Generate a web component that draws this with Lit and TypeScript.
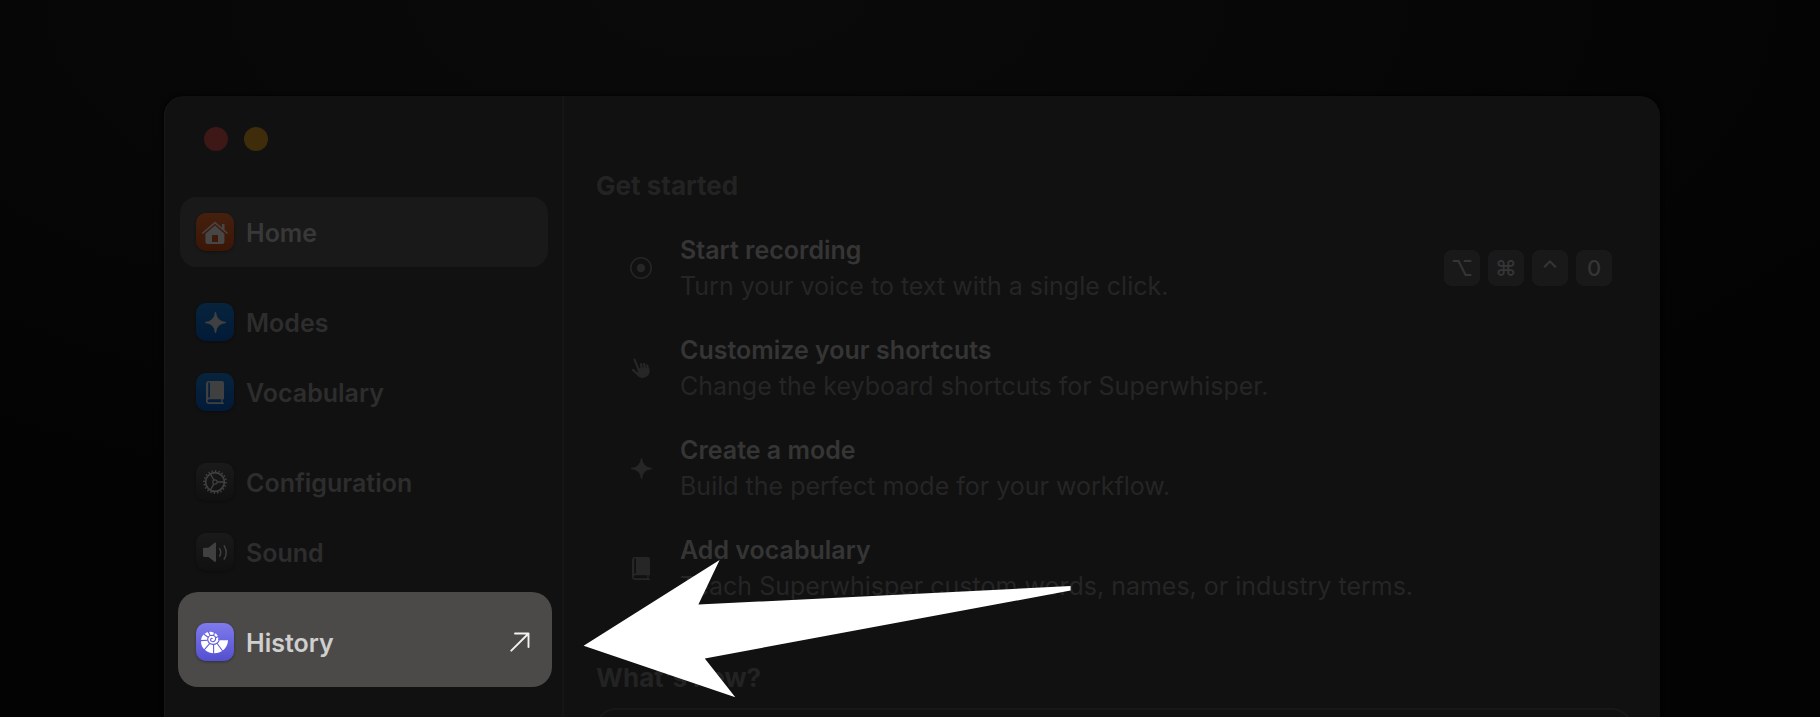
import { LitElement, html, svg, css, nothing } from "lit";
import { customElement, property } from "lit/decorators.js";

const book = svg`
  <path fill-rule="evenodd" d="M13 8H26Q28 8 28 10V25Q28 26.500 26.600 26.700V29.300L28 30V31H13Q10 31 10 28V11Q10 8 13 8ZM12.300 9.500V24.500H14V9.500ZM13 26.300Q11.600 26.300 11.600 27.800T13 29.300H25.300V26.300Z" fill="currentColor"/>`;

const sparkle = svg`
  <path d="M19.500 9Q20.400 18.600 30 19.500Q20.400 20.400 19.500 30Q18.600 20.400 9 19.500Q18.600 18.600 19.500 9Z" fill="currentColor" stroke="currentColor" stroke-width="1" stroke-linejoin="round"/>`;

const glyphs: Record<string, unknown> = {
  home: svg`
    <path d="M6.800 20 19 9.600 31 20" fill="none" stroke="currentColor" stroke-width="1.600" stroke-linecap="round" stroke-linejoin="round"/>
    <path d="M26 11H28.500V18L26 15.600Z" fill="currentColor"/>
    <path fill-rule="evenodd" d="M19 12.600 28.400 20.800V29Q28.400 31 26.400 31H11.400Q9.400 31 9.400 29V20.800ZM16 22V29H22V22Z" fill="currentColor"/>`,
  sparkle,
  book,
  gear: svg`
    <g fill="none" stroke="currentColor">
      <circle cx="19" cy="19" r="9.400" stroke-width="1.700"/>
      <circle cx="19" cy="19" r="11" stroke-width="1.800" pathLength="40" stroke-dasharray="0.800 1.200"/>
      <circle cx="19" cy="19" r="2.200" stroke-width="1.200"/>
      <path d="M21.200 19H28M17.900 17.100 14.400 11M17.900 20.900 14.400 27" stroke-width="1.400"/>
    </g>`,
  sound: svg`
    <path d="M7 16Q7 14.700 8.300 14.700H12.400L18.600 9.800Q20 9 20 10.700V27.800Q20 29.500 18.600 28.700L12.400 24H8.300Q7 24 7 22.700Z" fill="currentColor"/>
    <path d="M23.600 15.600Q26 19.300 23.600 23.200M28.200 12.800Q32.300 19.300 28.200 26" fill="none" stroke="currentColor" stroke-width="1.500" stroke-linecap="round"/>`,
  shell: svg`
    <path d="M20.500 17.200H32Q31.800 22.500 28.300 26.200Q24.300 30.300 18 30.300Q12 30.300 8.400 26.600Q5 23 5 18.200Q5 13.600 8.200 11Q11.200 8.500 15.600 8.900Q19.800 9.400 21.600 12.600Q22.800 15 22 17.600Z" fill="currentColor"/>
    <g class="cut" fill="none" stroke-width="1.100">
      <path d="M23.300 17.300Q21.200 21.600 17 21.400Q12.200 20.900 11.700 16.600Q11.800 12.500 15.800 12.200Q19.600 12.300 19.700 15.800Q19.300 18.800 16.600 18.700Q14.400 18.400 14.600 16.400Q15 15 16.600 15.500"/>
      <path d="M14.200 12.600 12.200 8.500M17.600 12.400 18.800 8.700M19.600 14.800 23 13.200M12.200 14.200 8 11.200M11.600 17.200 4.700 17.600M13.600 20.600 8.200 26.800M17.600 21.400V30.800M21 20.200 26.600 28"/>
    </g>`,
  record: svg`
    <circle cx="19" cy="19" r="10.200" fill="none" stroke="currentColor" stroke-width="1.500"/>
    <circle cx="19" cy="19" r="4.200" fill="currentColor"/>`,
  hand: svg`
    <path d="M12.500 10.600 16.600 20.500M18.900 15.200 20 20M22.100 15 22.900 20M25.200 16.400 26 20M10.900 20.900 17 26.500" fill="none" stroke="currentColor" stroke-width="2.300" stroke-linecap="round"/>
    <path d="M15.500 19.300 27.200 19Q28.600 23.400 26.300 26.300Q23.600 29.400 19.600 29Q17 28.600 14.600 25.800L13 24L15.800 23Z" fill="currentColor"/>`,
};

@customElement("nav-item")
class NavItem extends LitElement {
  @property() icon = "";
  @property() label = "";
  @property() tone = "";
  @property({ type: Boolean }) current = false;
  @property({ type: Boolean }) spotlight = false;

  static styles = css`
    :host { display: block; }
    .item {
      position: relative;
      display: flex;
      align-items: center;
      gap: 12px;
      height: 70px;
      padding: 0 16px;
      border-radius: 16px;
      color: #2d2d2d;
      text-decoration: none;
      font-size: 25px;
      line-height: 32px;
      font-weight: 600;
    }
    .current { background: #191919; color: #383838; }
    .spotlight { color: #cfcfce; }
    .spotlight::before {
      content: "";
      position: absolute;
      inset: -15px -4px -10px -2px;
      border-radius: 20px;
      background: #4b4a48;
    }
    .tile {
      position: relative;
      flex: none;
      width: 38px;
      height: 38px;
      border-radius: 10px;
      color: #404040;
      box-shadow: 0 1px 3px rgb(0 0 0 / 0.35);
    }
    .tile svg { display: block; width: 38px; height: 38px; }
    .orange { background: linear-gradient(#46200f, #3b1505); color: #464646; }
    .blue { background: linear-gradient(#07243c, #021a38); }
    .graphite { background: linear-gradient(#1a1a1a, #101010); }
    .violet { background: linear-gradient(#7f7bec, #544fd0); color: #fff; }
    .cut { stroke: #625dd9; }
    .label { position: relative; flex: 1; padding-top: 2px; }
    .out { position: relative; width: 20px; height: 20px; margin-right: 2px; color: #f2f2f2; }
  `;

  render() {
    return html`
      <a class="item ${this.current ? "current" : ""} ${this.spotlight ? "spotlight" : ""}"
        href="#${this.label.toLowerCase()}" aria-current=${this.current ? "page" : nothing}>
        <span class="tile ${this.tone}">
          <svg viewBox="0 0 38 38" aria-hidden="true">${glyphs[this.icon]}</svg>
        </span>
        <span class="label">${this.label}</span>
        ${this.spotlight
          ? html`<svg class="out" viewBox="0 0 20 20" fill="none" stroke="currentColor" stroke-width="1.900" stroke-linecap="round" stroke-linejoin="round" aria-hidden="true">
              <path d="M1.300 18.700 18.500 1.500M5 1.500H18.500V15"/>
            </svg>`
          : nothing}
      </a>`;
  }
}

const groups = [
  [{ icon: "home", label: "Home", tone: "orange", current: true }],
  [
    { icon: "sparkle", label: "Modes", tone: "blue" },
    { icon: "book", label: "Vocabulary", tone: "blue" },
  ],
  [
    { icon: "gear", label: "Configuration", tone: "graphite" },
    { icon: "sound", label: "Sound", tone: "graphite" },
  ],
  [{ icon: "shell", label: "History", tone: "violet", spotlight: true }],
] as { icon: string; label: string; tone: string; current?: boolean; spotlight?: boolean }[][];

const steps = [
  { icon: "record", title: "Start recording", text: "Turn your voice to text with a single click.", keys: ["⌥", "⌘", "⌃", "0"] },
  { icon: "hand", title: "Customize your shortcuts", text: "Change the keyboard shortcuts for Superwhisper.", keys: [] },
  { icon: "sparkle", title: "Create a mode", text: "Build the perfect mode for your workflow.", keys: [] },
  { icon: "book", title: "Add vocabulary", text: "Teach Superwhisper custom words, names, or industry terms.", keys: [] },
];

@customElement("app-root")
class AppRoot extends LitElement {
  static styles = css`
    :host {
      display: flex;
      position: relative;
      box-sizing: border-box;
      height: 100vh;
      overflow: hidden;
      padding: 96px 160px 0 164px;
      background:
        radial-gradient(ellipse 70% 75% at 40% 0, #0a0a0a, transparent),
        #030303;
      font-family: Inter, "Liberation Sans", sans-serif;
      font-optical-sizing: none;
    }
    .window {
      flex: 1;
      display: grid;
      grid-template-columns: 400px minmax(0, 1fr);
      background: #111111;
      border-radius: 20px 20px 0 0;
      box-shadow: 0 0 4px #000;
    }
    .sidebar {
      padding: 31px 14px 0 16px;
      border-right: 2px solid #151515;
      box-shadow: inset 1px 0 #181818;
      border-radius: 20px 0 0 0;
    }
    .lights { display: flex; gap: 16px; padding-left: 24px; }
    .light { width: 24px; height: 24px; padding: 0; border: 0; border-radius: 50%; }
    .close { background: #3e1717; }
    .minimize { background: #3f2c0b; }
    .nav { display: grid; gap: 20px; margin-top: 46px; }
    .main { padding: 72px 28px 0 32px; }
    .heading {
      margin: 0;
      font-size: 26px;
      line-height: 36px;
      font-weight: 700;
      color: #232323;
    }
    .steps { display: grid; gap: 28px; margin: 0; padding: 28px 20px 56px 26px; list-style: none; }
    .step { display: flex; align-items: center; }
    .glyph { flex: none; width: 38px; height: 38px; color: #262626; }
    .copy { flex: 1; padding-left: 20px; font-size: 25px; line-height: 36px; }
    .title { margin: 0; font-size: 25px; font-weight: 600; color: #353535; }
    .text { margin: 0; color: #252525; }
    .keys { display: flex; gap: 8px; }
    .key {
      width: 36px;
      border-radius: 8px;
      background: #191919;
      color: #353535;
      font: 500 22px/36px Inter, "DejaVu Sans", sans-serif;
      text-align: center;
    }
    .card {
      height: 200px;
      margin-top: 12px;
      border: 2px solid #181818;
      border-radius: 20px;
    }
    .arrow { position: absolute; left: 583px; top: 559px; width: 490px; height: 140px; }
  `;

  render() {
    return html`
      <div class="window">
        <aside class="sidebar">
          <div class="lights">
            <button class="light close" aria-label="Close"></button>
            <button class="light minimize" aria-label="Minimize"></button>
          </div>
          <nav class="nav">
            ${groups.map((g) => html`<div>
              ${g.map((i) => html`<nav-item .icon=${i.icon} .label=${i.label} .tone=${i.tone}
                .current=${!!i.current} .spotlight=${!!i.spotlight}></nav-item>`)}
            </div>`)}
          </nav>
        </aside>
        <main class="main">
          <h2 class="heading">Get started</h2>
          <ul class="steps">
            ${steps.map((s) => html`<li class="step">
              <svg class="glyph" viewBox="0 0 38 38" aria-hidden="true">${glyphs[s.icon]}</svg>
              <div class="copy">
                <h3 class="title">${s.title}</h3>
                <p class="text">${s.text}</p>
              </div>
              ${s.keys.length
                ? html`<div class="keys">${s.keys.map((k) => html`<kbd class="key">${k}</kbd>`)}</div>`
                : nothing}
            </li>`)}
          </ul>
          <h2 class="heading">What's new?</h2>
          <section class="card"></section>
        </main>
      </div>
      <svg class="arrow" viewBox="583 559 490 140" aria-hidden="true">
        <path d="M583.600 645.700 719.600 560 698.400 604.600 1070.600 586V590.500L704.800 658.400 735.300 697.200Z" fill="#fff"/>
      </svg>`;
  }
}
